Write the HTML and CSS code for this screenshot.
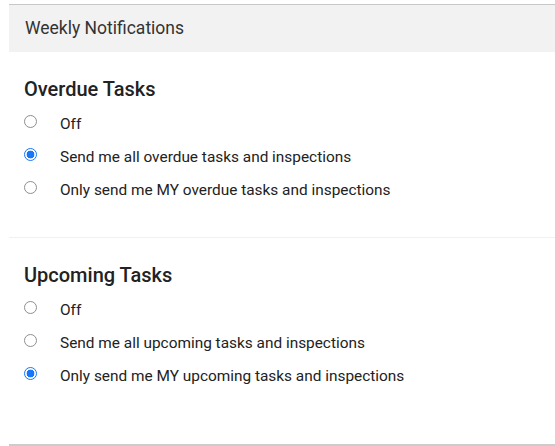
FILE: index.html
```html
<!DOCTYPE html>
<html lang="en">
<head>
  <meta charset="UTF-8">
  <meta name="viewport" content="width=device-width, initial-scale=1.0">
  <title>Weekly Notifications</title>
  <link rel="stylesheet" href="styles.css">
</head>
<body>
  <div class="panel">
    <div class="panel-heading">Weekly Notifications</div>

    <!-- overdue -->
    <div class="section">
      <h3>Overdue Tasks</h3>
      <label class="option"><input type="radio" name="overdue"><span>Off</span></label>
      <label class="option"><input type="radio" name="overdue" checked><span>Send me all overdue tasks and inspections</span></label>
      <label class="option"><input type="radio" name="overdue"><span>Only send me MY overdue tasks and inspections</span></label>
    </div>

    <!-- upcoming -->
    <div class="section">
      <h3>Upcoming Tasks</h3>
      <label class="option"><input type="radio" name="upcoming"><span>Off</span></label>
      <label class="option"><input type="radio" name="upcoming"><span>Send me all upcoming tasks and inspections</span></label>
      <label class="option"><input type="radio" name="upcoming" checked><span>Only send me MY upcoming tasks and inspections</span></label>
    </div>
  </div>
</body>
</html>
```

FILE: styles.css
```css
body {
  margin: 0;
  padding: 4px 0 0 9px;
  font-family: Roboto, 'Helvetica Neue', Arial, sans-serif;
  color: #333;
  background: #fff;
}
.panel {
  border-top: 1px solid #c8c8c8;
  border-bottom: 2px solid #cccccc;
}
.panel-heading {
  background-color: #f2f2f2;
  height: 47px;
  line-height: 47px;
  padding-left: 16px;
  font-size: 17.5px;
  color: #333;
}
.section {
  padding: 26px 15px 31px;
}
.section + .section {
  border-top: 1px solid #f0f0f0;
  padding-bottom: 52px;
}
.section h3 {
  margin: 0 0 7px;
  font-size: 20px;
  font-weight: 500;
  color: #222;
  line-height: 22px;
}
.option {
  display: flex;
  align-items: center;
  height: 33px;
  font-size: 15.4px;
  color: #222;
  cursor: pointer;
}
.option input {
  appearance: none;
  -webkit-appearance: none;
  margin: 0 23px 0 0;
  width: 13px;
  height: 13px;
  border: 1px solid #8e8e8e;
  border-radius: 50%;
  background: #fff;
  box-sizing: border-box;
  position: relative;
  top: -2px;
}
.option input:checked {
  border: 1.5px solid #1677f8;
  background: radial-gradient(circle, #1677f8 0 3.6px, #fff 4.2px);
}
```
